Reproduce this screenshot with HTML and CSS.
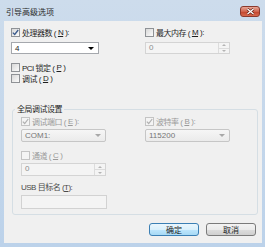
FILE: index.html
```html
<!DOCTYPE html>
<html lang="zh-CN">
<head>
    <meta charset="UTF-8">
    <title>引导高级选项</title>
    <link rel="stylesheet" href="styles.css">
</head>
<body>
<div class="window">
    <!-- 标题栏 -->
    <div class="titlebar">
        <span class="title">引导高级选项</span>
        <span class="close">
            <svg width="9" height="7" viewBox="0 0 9 7"><path d="M1.5 1 L7.5 6 M7.5 1 L1.5 6" stroke="#5a1a10" stroke-width="2.6"/><path d="M1.5 1 L7.5 6 M7.5 1 L1.5 6" stroke="#fff" stroke-width="1.4"/></svg>
        </span>
    </div>

    <!-- 窗口内容 -->
    <div class="client">
        <div class="top">
            <div class="col">
                <label class="check"><span class="box"><svg width="7" height="7" viewBox="0 0 7 7"><path d="M0.8 3.6 L2.7 5.5 L6.2 1" fill="none" stroke="#3a5a8c" stroke-width="1.3"/></svg></span>处理器数 (<u>N</u>):</label>
                <div class="select">4<span class="arrow"></span></div>
            </div>
            <div class="col">
                <label class="check"><span class="box"></span>最大内存 (<u>M</u>):</label>
                <div class="spin short"><span class="val">0</span><span class="btns"><i class="up"></i><i class="down"></i></span></div>
            </div>
        </div>
        <label class="check pci"><span class="box"></span>PCI 锁定 (<u>P</u>)</label>
        <label class="check"><span class="box"></span>调试 (<u>D</u>)</label>

        <fieldset class="group">
            <legend>全局调试设置</legend>
            <div class="pair">
                <div class="col">
                    <label class="check off"><span class="box"><svg width="7" height="7" viewBox="0 0 7 7"><path d="M0.8 3.6 L2.7 5.5 L6.2 1" fill="none" stroke="#b0b0b0" stroke-width="1.2"/></svg></span>调试端口 (<u>E</u>):</label>
                    <div class="dropdown">COM1:<span class="arrow"></span></div>
                </div>
                <div class="col">
                    <label class="check off"><span class="box"><svg width="7" height="7" viewBox="0 0 7 7"><path d="M0.8 3.6 L2.7 5.5 L6.2 1" fill="none" stroke="#b0b0b0" stroke-width="1.2"/></svg></span>波特率 (<u>B</u>):</label>
                    <div class="dropdown">115200<span class="arrow"></span></div>
                </div>
            </div>
            <label class="check off channel"><span class="box"></span>通道 (<u>C</u>)</label>
            <div class="spin narrow"><span class="val">0</span><span class="btns"><i class="up"></i><i class="down"></i></span></div>
            <div class="label usb">USB 目标名 (<u>T</u>):</div>
            <div class="textbox"></div>
        </fieldset>

        <div class="buttons">
            <button class="btn default">确定</button>
            <button class="btn">取消</button>
        </div>
    </div>
</div>
</body>
</html>
```

FILE: styles.css
```css
* {
    box-sizing: border-box;
}

body {
    margin: 0;
    background: #fff;
    font-family: "Liberation Sans", "Noto Sans CJK SC", sans-serif;
    font-size: 8px;
    color: #1e1e1e;
}

u {
    text-decoration: underline;
}

.window {
    width: 265px;
    height: 247px;
    display: flex;
    flex-direction: column;
    background: linear-gradient(#cddcec, #bcd2ea);
}

/* 标题栏 */
.titlebar {
    height: 21px;
    flex: none;
    display: flex;
    align-items: center;
    justify-content: space-between;
    padding: 1px 5px 0 6px;
}

.title {
    color: #2a2a2a;
    letter-spacing: 0;
}

.close {
    width: 20px;
    height: 11px;
    border: 1px solid #8a3a2e;
    border-radius: 3px;
    background: linear-gradient(#e8a797, #d0644e 50%, #c0432c 51%, #d86a4e);
    display: flex;
    align-items: center;
    justify-content: center;
}

/* 窗口内容 */
.client {
    flex: 1;
    margin: 0 3px 4px 4px;
    background: #f0f0f0;
    padding: 6px 4px 0 7px;
    display: flex;
    flex-direction: column;
}

.top {
    display: grid;
    grid-template-columns: 88px 85px;
    column-gap: 46px;
}

.check {
    display: flex;
    align-items: center;
    gap: 2px;
    height: 11px;
    white-space: nowrap;
    letter-spacing: -0.5px;
}

.check.off,
.check.off u {
    color: #9a9a9a;
}

.box {
    width: 9px;
    height: 9px;
    flex: none;
    border: 1px solid #8f9296;
    background: linear-gradient(135deg, #d8d8d8, #fbfbfb);
    display: flex;
    align-items: center;
    justify-content: center;
}

.off .box {
    border-color: #c4c4c4;
    background: #f4f4f4;
}

.select {
    height: 12px;
    margin-top: 4px;
    border: 1px solid #a5a8ad;
    background: #fff;
    display: flex;
    align-items: center;
    justify-content: space-between;
    padding: 0 4px 0 3px;
}

.arrow {
    width: 0;
    height: 0;
    border-left: 3px solid transparent;
    border-right: 3px solid transparent;
    border-top: 3px solid #000;
}

.spin {
    display: flex;
    border: 1px solid #d4d4d4;
    background: #f4f4f4;
    color: #8c8c8c;
}

.spin.short {
    height: 12px;
    margin-top: 4px;
}

.spin.narrow {
    height: 13px;
    width: 85px;
    margin-top: 2px;
}

.spin .val {
    flex: 1;
    padding-left: 3px;
    line-height: 10px;
}

.spin .btns {
    width: 11px;
    display: flex;
    flex-direction: column;
    border-left: 1px solid #dcdcdc;
}

.spin .btns i {
    flex: 1;
    display: flex;
    align-items: center;
    justify-content: center;
}

.spin .btns i + i {
    border-top: 1px solid #dcdcdc;
}

.spin .btns i::after {
    content: "";
    border-left: 2px solid transparent;
    border-right: 2px solid transparent;
}

.spin .up::after {
    border-bottom: 2px solid #b4b4b4;
}

.spin .down::after {
    border-top: 2px solid #b4b4b4;
}

.pci {
    margin-top: 8px;
}

/* 全局调试设置 */
.group {
    margin: 20px 0 0 1px;
    padding: 1px 8px 5px 8px;
    border: 1px solid #d5dee4;
    border-radius: 3px;
    min-width: 0;
}

.group legend {
    padding: 0 2px;
    margin-left: -6px;
    line-height: 11px;
    letter-spacing: -0.5px;
}

.pair {
    display: grid;
    grid-template-columns: 85px 85px;
    column-gap: 39px;
}

.dropdown {
    height: 13px;
    margin-top: 2px;
    border: 1px solid #c6c6c6;
    border-radius: 2px;
    background: linear-gradient(#f6f6f6, #ebebeb);
    color: #767676;
    display: flex;
    align-items: center;
    justify-content: space-between;
    padding: 0 4px 0 3px;
}

.dropdown .arrow {
    border-top-color: #a8a8a8;
}

.channel {
    margin-top: 8px;
}

.label.usb {
    margin-top: 6px;
    height: 11px;
    line-height: 11px;
    color: #4a4a4a;
    letter-spacing: -0.5px;
}

.textbox {
    width: 86px;
    height: 14px;
    margin-top: 2px;
    border: 1px solid #d2d2d2;
    background: #f4f4f4;
}

/* 按钮 */
.buttons {
    display: flex;
    justify-content: flex-end;
    gap: 7px;
    margin: 8px 2px 0 0;
}

.btn {
    width: 50px;
    height: 13px;
    padding: 0;
    font: inherit;
    color: #1e1e1e;
    border: 1px solid #7b7b7b;
    border-radius: 3px;
    background: linear-gradient(#f3f3f3, #ebebeb 50%, #dddddd 51%, #cfcfcf);
}

.btn.default {
    border-color: #3b7fb4;
    background: linear-gradient(#eaf6fd, #d9f0fc 50%, #bee6fd 51%, #a7d9f5);
}
```
